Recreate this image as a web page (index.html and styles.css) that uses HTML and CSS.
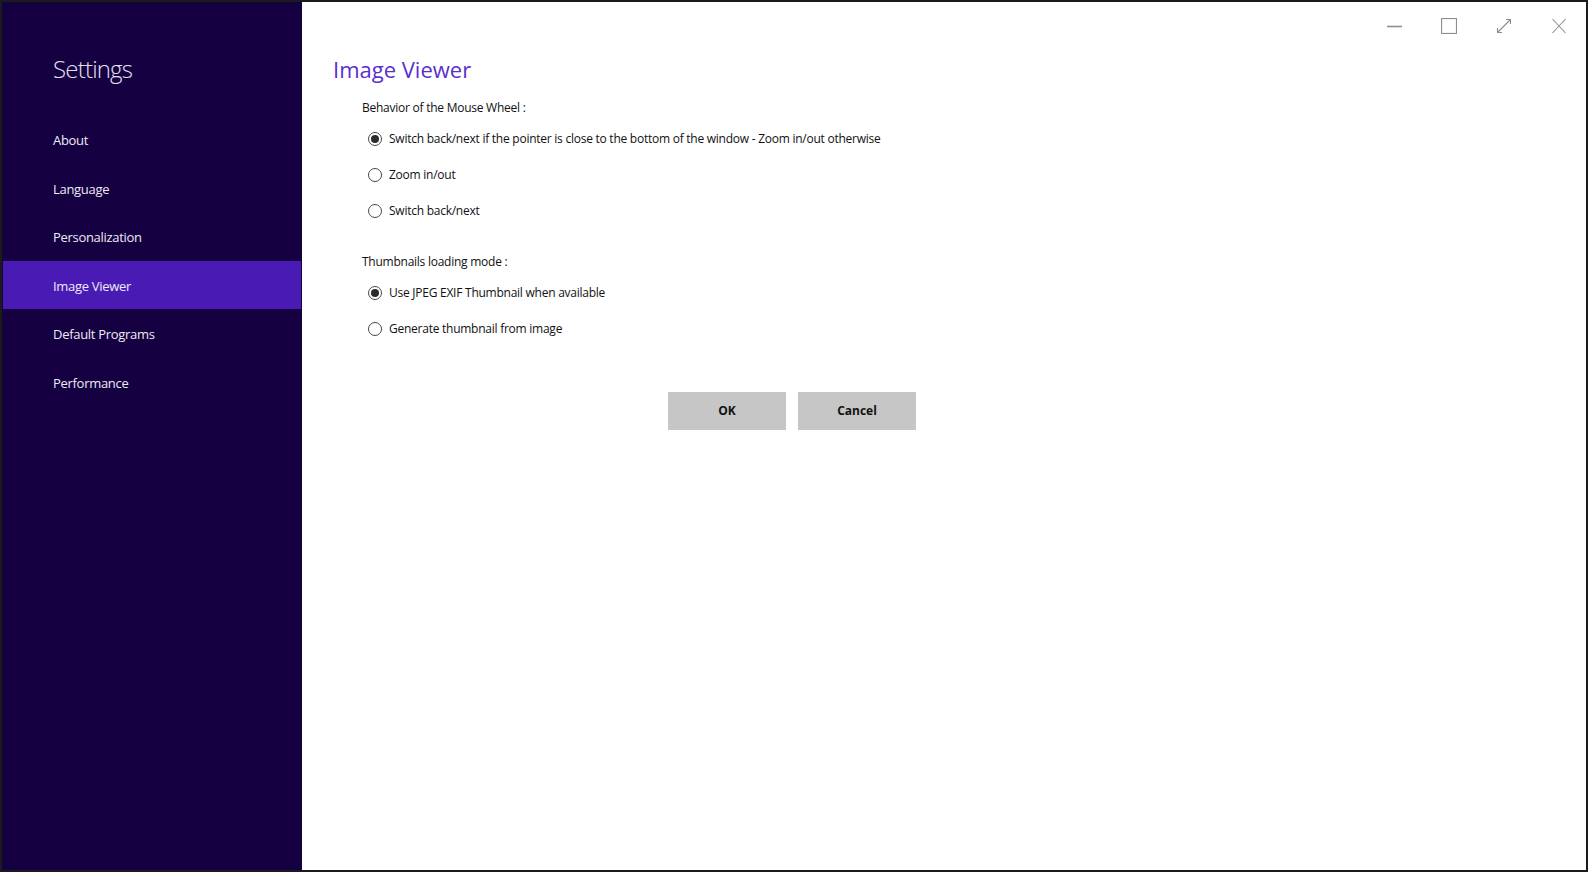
FILE: index.html
```html
<!DOCTYPE html>
<html lang="en">
<head>
    <meta charset="UTF-8">
    <title>Settings</title>
    <link rel="stylesheet" href="styles.css">
</head>
<body>
    <div class="window">
        <div class="sidebar">
            <div class="sidebar-title">Settings</div>
            <ul class="nav">
                <li class="nav-item">About</li>
                <li class="nav-item">Language</li>
                <li class="nav-item">Personalization</li>
                <li class="nav-item active">Image Viewer</li>
                <li class="nav-item">Default Programs</li>
                <li class="nav-item">Performance</li>
            </ul>
        </div>
        <div class="main">
            <div class="titlebar">
                <span class="win-btn">
                    <svg width="16" height="16" viewBox="0 0 16 16"><line x1="1" y1="8.5" x2="16" y2="8.5" stroke="#8e8e8e" stroke-width="1.6"/></svg>
                </span>
                <span class="win-btn">
                    <svg width="16" height="16" viewBox="0 0 16 16"><rect x="0.5" y="0.5" width="15" height="15" fill="none" stroke="#8e8e8e" stroke-width="1.2"/></svg>
                </span>
                <span class="win-btn">
                    <svg width="16" height="16" viewBox="0 0 16 16"><path d="M1.5 14.5 L14.5 1.5 M10 1.5 H14.5 V6 M1.5 10 V14.5 H6" fill="none" stroke="#8e8e8e" stroke-width="1.1"/></svg>
                </span>
                <span class="win-btn">
                    <svg width="16" height="16" viewBox="0 0 16 16"><path d="M1.5 1 L14.5 15 M14.5 1 L1.5 15" fill="none" stroke="#8e8e8e" stroke-width="1.1"/></svg>
                </span>
            </div>

            <h1 class="page-title">Image Viewer</h1>

            <div class="section">
                <div class="section-label">Behavior of the Mouse Wheel :</div>
                <label class="radio-row"><span class="radio checked"></span>Switch back/next if the pointer is close to the bottom of the window - Zoom in/out otherwise</label>
                <label class="radio-row"><span class="radio"></span>Zoom in/out</label>
                <label class="radio-row"><span class="radio"></span>Switch back/next</label>
            </div>

            <div class="section second">
                <div class="section-label">Thumbnails loading mode :</div>
                <label class="radio-row"><span class="radio checked"></span>Use JPEG EXIF Thumbnail when available</label>
                <label class="radio-row"><span class="radio"></span>Generate thumbnail from image</label>
            </div>

            <div class="buttons">
                <button class="button">OK</button>
                <button class="button">Cancel</button>
            </div>
        </div>
    </div>
</body>
</html>
```

FILE: styles.css
```css
html, body {
    margin: 0;
    height: 100%;
}
body {
    background-color: #1b1b1b;
    font-family: "Open Sans", "Noto Sans", Arial, sans-serif;
    box-sizing: border-box;
    padding: 2px;
}
.window {
    display: flex;
    height: 100%;
    background-color: #fff;
}
.sidebar {
    width: 300px;
    flex-shrink: 0;
    background-color: #150042;
    padding-top: 51px;
    box-sizing: border-box;
}
.sidebar-title {
    padding-left: 51px;
    font-size: 24px;
    font-weight: 300;
    letter-spacing: -0.8px;
    line-height: 32px;
    color: #e4e0ee;
}
.nav {
    list-style: none;
    margin: 30px 0 0;
    padding: 0;
}
.nav-item {
    height: 48px;
    box-sizing: border-box;
    padding: 3px 0 0 50px;
    line-height: 45px;
    margin: 0 1px 0.5px;
    font-size: 13px;
    letter-spacing: -0.3px;
    color: #eeebf5;
}
.nav-item.active {
    background-color: #4a1ab5;
}
.main {
    flex: 1;
    display: flex;
    flex-direction: column;
}
.titlebar {
    display: flex;
    justify-content: flex-end;
    height: 46px;
}
.win-btn {
    width: 55px;
    display: flex;
    align-items: center;
    justify-content: center;
    padding-top: 2px;
}
.page-title {
    margin: 6px 0 0 31px;
    font-size: 22px;
    font-weight: 400;
    line-height: 30px;
    color: #5a2fcf;
}
.section {
    padding-left: 60px;
    margin-top: 13.5px;
    font-size: 12px;
    letter-spacing: -0.25px;
    color: #111;
}
.section.second {
    margin-top: 23px;
}
.section-label {
    line-height: 20px;
    margin-bottom: 3px;
}
.radio-row {
    display: flex;
    align-items: center;
    height: 36px;
    padding-left: 6px;
}
.radio {
    width: 14px;
    height: 14px;
    border: 1px solid #4a4a4a;
    border-radius: 50%;
    box-sizing: border-box;
    margin-right: 7px;
    display: flex;
    align-items: center;
    justify-content: center;
}
.radio.checked::after {
    content: "";
    width: 8px;
    height: 8px;
    border-radius: 50%;
    background-color: #2b2b2b;
}
.buttons {
    display: flex;
    gap: 12px;
    margin: 45px 0 0 366px;
}
.button {
    width: 118px;
    height: 38px;
    border: none;
    background-color: #c6c6c6;
    font-family: inherit;
    font-size: 12px;
    font-weight: 700;
    color: #111;
}
```
